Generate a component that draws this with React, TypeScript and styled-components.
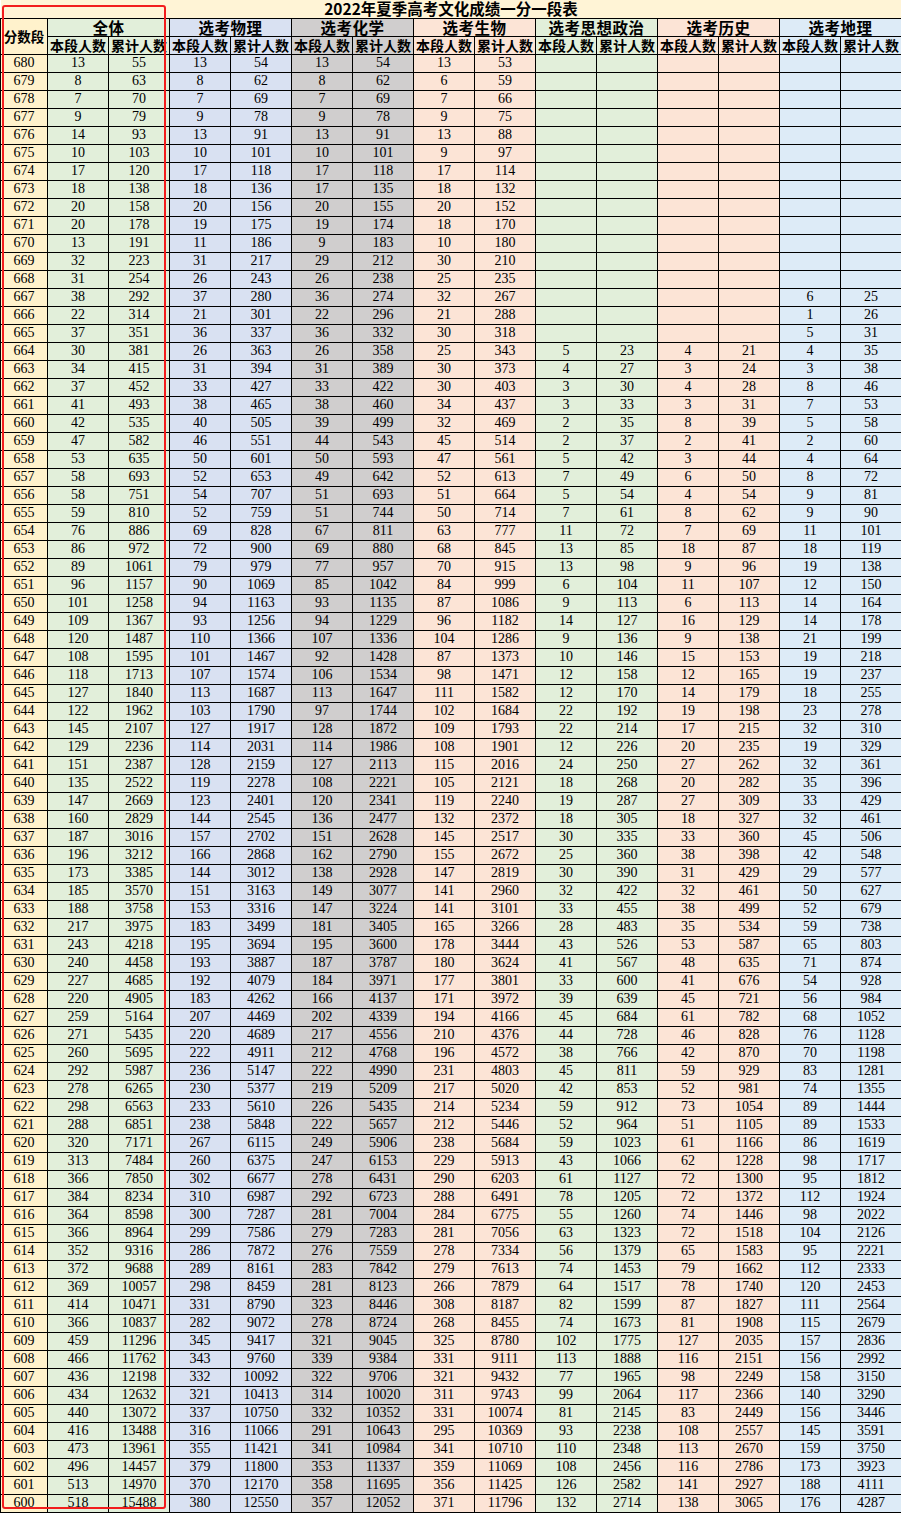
import React from "react";
import styled, { createGlobalStyle } from "styled-components";

const GlobalStyle = createGlobalStyle`
    html, body {
        margin: 0;
        padding: 0;
        background: #ffffff;
    }
`;

// score, then (本段, 累计) pairs for 全体, 物理, 化学, 生物, 政治, 历史, 地理
const RAW = `
680 13 55 13 54 13 54 13 53 - - - - - -
679 8 63 8 62 8 62 6 59 - - - - - -
678 7 70 7 69 7 69 7 66 - - - - - -
677 9 79 9 78 9 78 9 75 - - - - - -
676 14 93 13 91 13 91 13 88 - - - - - -
675 10 103 10 101 10 101 9 97 - - - - - -
674 17 120 17 118 17 118 17 114 - - - - - -
673 18 138 18 136 17 135 18 132 - - - - - -
672 20 158 20 156 20 155 20 152 - - - - - -
671 20 178 19 175 19 174 18 170 - - - - - -
670 13 191 11 186 9 183 10 180 - - - - - -
669 32 223 31 217 29 212 30 210 - - - - - -
668 31 254 26 243 26 238 25 235 - - - - - -
667 38 292 37 280 36 274 32 267 - - - - 6 25
666 22 314 21 301 22 296 21 288 - - - - 1 26
665 37 351 36 337 36 332 30 318 - - - - 5 31
664 30 381 26 363 26 358 25 343 5 23 4 21 4 35
663 34 415 31 394 31 389 30 373 4 27 3 24 3 38
662 37 452 33 427 33 422 30 403 3 30 4 28 8 46
661 41 493 38 465 38 460 34 437 3 33 3 31 7 53
660 42 535 40 505 39 499 32 469 2 35 8 39 5 58
659 47 582 46 551 44 543 45 514 2 37 2 41 2 60
658 53 635 50 601 50 593 47 561 5 42 3 44 4 64
657 58 693 52 653 49 642 52 613 7 49 6 50 8 72
656 58 751 54 707 51 693 51 664 5 54 4 54 9 81
655 59 810 52 759 51 744 50 714 7 61 8 62 9 90
654 76 886 69 828 67 811 63 777 11 72 7 69 11 101
653 86 972 72 900 69 880 68 845 13 85 18 87 18 119
652 89 1061 79 979 77 957 70 915 13 98 9 96 19 138
651 96 1157 90 1069 85 1042 84 999 6 104 11 107 12 150
650 101 1258 94 1163 93 1135 87 1086 9 113 6 113 14 164
649 109 1367 93 1256 94 1229 96 1182 14 127 16 129 14 178
648 120 1487 110 1366 107 1336 104 1286 9 136 9 138 21 199
647 108 1595 101 1467 92 1428 87 1373 10 146 15 153 19 218
646 118 1713 107 1574 106 1534 98 1471 12 158 12 165 19 237
645 127 1840 113 1687 113 1647 111 1582 12 170 14 179 18 255
644 122 1962 103 1790 97 1744 102 1684 22 192 19 198 23 278
643 145 2107 127 1917 128 1872 109 1793 22 214 17 215 32 310
642 129 2236 114 2031 114 1986 108 1901 12 226 20 235 19 329
641 151 2387 128 2159 127 2113 115 2016 24 250 27 262 32 361
640 135 2522 119 2278 108 2221 105 2121 18 268 20 282 35 396
639 147 2669 123 2401 120 2341 119 2240 19 287 27 309 33 429
638 160 2829 144 2545 136 2477 132 2372 18 305 18 327 32 461
637 187 3016 157 2702 151 2628 145 2517 30 335 33 360 45 506
636 196 3212 166 2868 162 2790 155 2672 25 360 38 398 42 548
635 173 3385 144 3012 138 2928 147 2819 30 390 31 429 29 577
634 185 3570 151 3163 149 3077 141 2960 32 422 32 461 50 627
633 188 3758 153 3316 147 3224 141 3101 33 455 38 499 52 679
632 217 3975 183 3499 181 3405 165 3266 28 483 35 534 59 738
631 243 4218 195 3694 195 3600 178 3444 43 526 53 587 65 803
630 240 4458 193 3887 187 3787 180 3624 41 567 48 635 71 874
629 227 4685 192 4079 184 3971 177 3801 33 600 41 676 54 928
628 220 4905 183 4262 166 4137 171 3972 39 639 45 721 56 984
627 259 5164 207 4469 202 4339 194 4166 45 684 61 782 68 1052
626 271 5435 220 4689 217 4556 210 4376 44 728 46 828 76 1128
625 260 5695 222 4911 212 4768 196 4572 38 766 42 870 70 1198
624 292 5987 236 5147 222 4990 231 4803 45 811 59 929 83 1281
623 278 6265 230 5377 219 5209 217 5020 42 853 52 981 74 1355
622 298 6563 233 5610 226 5435 214 5234 59 912 73 1054 89 1444
621 288 6851 238 5848 222 5657 212 5446 52 964 51 1105 89 1533
620 320 7171 267 6115 249 5906 238 5684 59 1023 61 1166 86 1619
619 313 7484 260 6375 247 6153 229 5913 43 1066 62 1228 98 1717
618 366 7850 302 6677 278 6431 290 6203 61 1127 72 1300 95 1812
617 384 8234 310 6987 292 6723 288 6491 78 1205 72 1372 112 1924
616 364 8598 300 7287 281 7004 284 6775 55 1260 74 1446 98 2022
615 366 8964 299 7586 279 7283 281 7056 63 1323 72 1518 104 2126
614 352 9316 286 7872 276 7559 278 7334 56 1379 65 1583 95 2221
613 372 9688 289 8161 283 7842 279 7613 74 1453 79 1662 112 2333
612 369 10057 298 8459 281 8123 266 7879 64 1517 78 1740 120 2453
611 414 10471 331 8790 323 8446 308 8187 82 1599 87 1827 111 2564
610 366 10837 282 9072 278 8724 268 8455 74 1673 81 1908 115 2679
609 459 11296 345 9417 321 9045 325 8780 102 1775 127 2035 157 2836
608 466 11762 343 9760 339 9384 331 9111 113 1888 116 2151 156 2992
607 436 12198 332 10092 322 9706 321 9432 77 1965 98 2249 158 3150
606 434 12632 321 10413 314 10020 311 9743 99 2064 117 2366 140 3290
605 440 13072 337 10750 332 10352 331 10074 81 2145 83 2449 156 3446
604 416 13488 316 11066 291 10643 295 10369 93 2238 108 2557 145 3591
603 473 13961 355 11421 341 10984 341 10710 110 2348 113 2670 159 3750
602 496 14457 379 11800 353 11337 359 11069 108 2456 116 2786 173 3923
601 513 14970 370 12170 358 11695 356 11425 126 2582 141 2927 188 4111
600 518 15488 380 12550 357 12052 371 11796 132 2714 138 3065 176 4287
`;

const rows = RAW.trim()
    .split("\n")
    .map((line) => line.trim().split(/\s+/).map((v) => (v === "-" ? "" : v)));

const GROUPS = [
    { name: "全体", bg: "#e2efda" },
    { name: "选考物理", bg: "#d9e1f2" },
    { name: "选考化学", bg: "#d0cece" },
    { name: "选考生物", bg: "#fce4d6" },
    { name: "选考思想政治", bg: "#e2efda" },
    { name: "选考历史", bg: "#fce4d6" },
    { name: "选考地理", bg: "#ddebf7" },
];

const SCORE_BG = "#fff2cc";

const Page = styled.div`
    position: relative;
    width: 901px;
`;

const Sheet = styled.table`
    width: 901px;
    table-layout: fixed;
    border-collapse: collapse;
    border-spacing: 0;
`;

const Row = styled.tr`
    height: 18px;
`;

const TitleCell = styled.td`
    padding: 0;
    height: 17px;
    background: #fff4d6;
    border-bottom: 1px solid #000;
    text-align: center;
    font-family: "Noto Sans CJK SC", "Noto Sans", sans-serif;
    font-weight: 700;
    font-size: 15.5px;
    line-height: 17px;
    color: #000;
`;

const HeadCell = styled.td<{ $bg: string; $size: number }>`
    padding: 0;
    height: 17px;
    background: ${({ $bg }) => $bg};
    border: 1px solid #000;
    text-align: center;
    white-space: nowrap;
    font-family: "Noto Sans CJK SC", "Noto Sans", sans-serif;
    font-weight: 700;
    font-size: ${({ $size }) => $size}px;
    line-height: 16px;
    letter-spacing: ${({ $size }) => ($size > 14 ? "0.5px" : "0")};
    color: #000;
`;

const DataCell = styled.td<{ $bg: string }>`
    padding: 0;
    height: 17px;
    background: ${({ $bg }) => $bg};
    border: 1px solid #000;
    text-align: center;
    font-family: "Liberation Serif", "DejaVu Serif", serif;
    font-size: 14px;
    line-height: 16px;
    color: #000;
`;

// red marker drawn over the 全体 block
const Highlight = styled.div`
    position: absolute;
    left: 2px;
    top: 5px;
    width: 160px;
    height: 1500px;
    border: 2.5px solid #f21d1d;
    border-radius: 3px;
    pointer-events: none;
`;

export default function App() {
    return (
        <Page>
            <GlobalStyle />
            <Sheet>
                <colgroup>
                    <col style={{ width: 47 }} />
                    {Array.from({ length: 14 }).map((_, i) => (
                        <col key={i} style={{ width: 61 }} />
                    ))}
                </colgroup>
                <thead>
                    <Row>
                        <TitleCell colSpan={15}>2022年夏季高考文化成绩一分一段表</TitleCell>
                    </Row>
                    <Row>
                        <HeadCell $bg={SCORE_BG} $size={13.5} rowSpan={2}>
                            分数段
                        </HeadCell>
                        {GROUPS.map((g) => (
                            <HeadCell key={g.name} $bg={g.bg} $size={15.5} colSpan={2}>
                                {g.name}
                            </HeadCell>
                        ))}
                    </Row>
                    <Row>
                        {GROUPS.map((g) => (
                            <React.Fragment key={g.name}>
                                <HeadCell $bg={g.bg} $size={14}>本段人数</HeadCell>
                                <HeadCell $bg={g.bg} $size={14}>累计人数</HeadCell>
                            </React.Fragment>
                        ))}
                    </Row>
                </thead>
                <tbody>
                    {rows.map((r) => (
                        <Row key={r[0]}>
                            <DataCell $bg={SCORE_BG}>{r[0]}</DataCell>
                            {r.slice(1).map((v, i) => (
                                <DataCell key={i} $bg={GROUPS[Math.floor(i / 2)].bg}>
                                    {v}
                                </DataCell>
                            ))}
                        </Row>
                    ))}
                </tbody>
            </Sheet>
            <Highlight />
        </Page>
    );
}
